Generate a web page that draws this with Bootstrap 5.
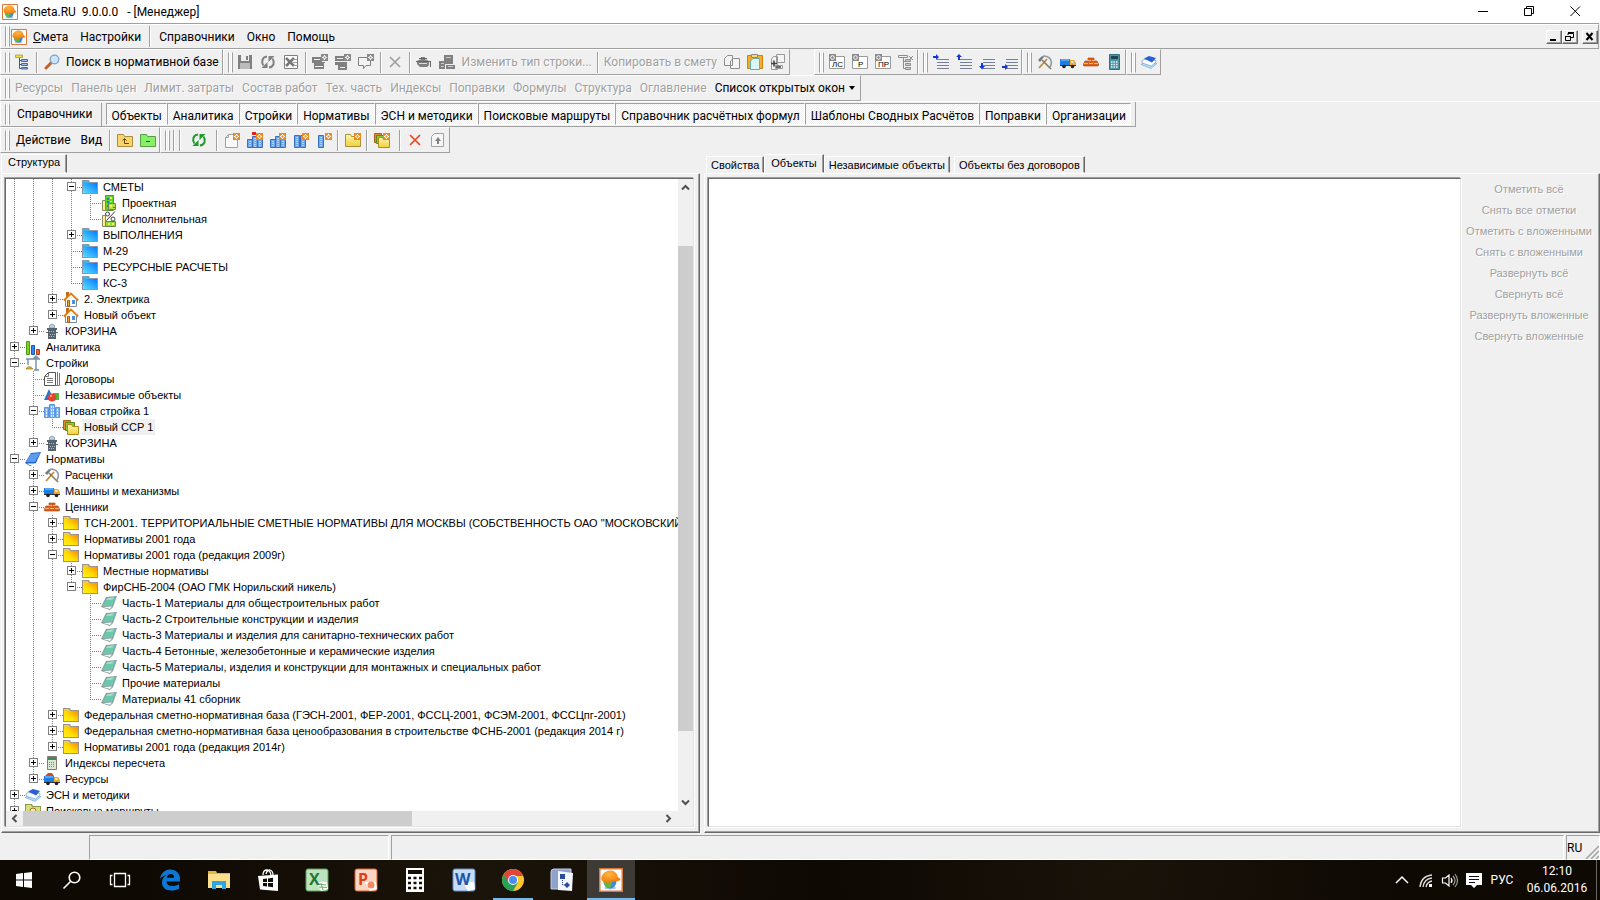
<!DOCTYPE html>
<html lang="ru">
<head>
<meta charset="utf-8">
<meta name="viewport" content="width=device-width, initial-scale=1">
<title>Smeta.RU 9.0.0.0 - [Менеджер]</title>
<link href="https://cdn.jsdelivr.net/npm/bootstrap@5.3.0/dist/css/bootstrap.min.css" rel="stylesheet">
<style>
:root{--face:#f0f0f0;--shade:#a0a0a0;--dark:#696969;--ui:Roboto,"Open Sans",sans-serif;--small:"Liberation Sans",Arial,sans-serif}
body{background:var(--face);color:#000;font:12px/16px var(--ui);height:100vh;overflow:hidden}
button{font:inherit;color:inherit;background:none;border:0;padding:0;white-space:nowrap}
svg{flex:none;display:block}
.ic{width:16px;height:16px}
/* title bar */
.titlebar{height:23px;background:#fff;padding:0 2px}
.titlebar h1{font:inherit;margin:0 0 0 5px;white-space:pre}
.win-btn{width:46px;height:23px;display:flex;align-items:center;justify-content:center}
.win-btn svg{width:11px;height:11px}
/* toolbars */
.band{height:26px}
.bar{height:26px;display:flex;align-items:center;border:1px solid;border-color:#fff var(--shade) var(--shade) #fff;padding-left:4px}
.menu-band{border-top:1px solid var(--shade);margin-right:1px}
.menu-band .bar{height:25px;flex:1}
.grip{width:5px;height:21px;margin-right:1px;border:1px solid;border-color:transparent var(--shade) transparent var(--shade);background:linear-gradient(90deg,#fff 1px,transparent 1px 2px,#fff 2px);flex:none}
.split{width:6px;height:21px;flex:none;background:linear-gradient(90deg,transparent 2px,var(--shade) 2px 3px,#fff 3px 4px,transparent 4px)}
.tb{width:23px;height:23px;display:flex;align-items:center;justify-content:center;flex:none}
.tx{padding:0 3px}
.panel-btn{padding:0 4px}
.act-btn{padding:0 5px}
.mn{padding:0 6px}
.off{color:var(--shade);text-shadow:1px 1px 0 #fff}
.gray{color:#808080}
.green{color:#1f9a2c}
.red{color:#ee4422}
.mdi{width:16px;height:14px;border:1px solid;border-color:#fff var(--dark) var(--dark) #fff;box-shadow:inset -1px -1px 0 var(--shade);display:flex;align-items:center;justify-content:center}
.mdi svg{width:10px;height:9px}
.section-first{height:23px;padding:0 8px 0 6px;border-right:1px solid var(--shade)}
.section-tab{height:22px;padding:3px 4px 0 5px;border:1px solid;border-color:var(--shade) #fff #fff var(--shade);background:repeating-conic-gradient(#fff 0 25%,#f0f0f0 0 50%) 0 0/2px 2px;line-height:16px}
/* panes */
.work{min-height:0}
.small-ui{font:11px/14px var(--small)}
.tabs{height:20px;align-items:flex-end}
.tabs button{height:17px;padding:0 4px;border:1px solid;border-color:#fff var(--dark) transparent #fff;box-shadow:inset -1px 0 0 var(--shade)}
.tabs button.on{height:19px;padding:0 6px 2px}
.page{border:1px solid;border-color:#fff var(--dark) var(--dark) #fff;box-shadow:inset -1px -1px 0 var(--shade);padding:4px 5px 5px 3px;min-height:0}
.sunk{border:1px solid;border-color:var(--dark) #e3e3e3 #e3e3e3 var(--dark);box-shadow:-1px -1px 0 var(--shade),1px 1px 0 #fff;background:#fff;min-width:0;min-height:0}
.left-pane{flex:699 1 0;min-width:0;margin-left:1px}
.right-pane{flex:896 1 0;min-width:0;margin-left:4px}
.right-pane .page{padding-right:2px}
.right-pane .tabs{padding-left:2px}
/* tree */
.tree,.tree ul{list-style:none;margin:0;padding:0}
.tree{padding-left:4px}
.tree ul{padding-left:19px}
.tree li{background:repeating-linear-gradient(#808080 0 1px,transparent 1px 2px) 4px 0/1px 100% no-repeat}
.tree li.end{background-size:1px 8px}
.node{height:16px;display:flex;align-items:center;white-space:nowrap;background:repeating-linear-gradient(90deg,#808080 0 1px,transparent 1px 2px) 4px 8px/11px 1px no-repeat}
.leaf{padding-left:15px}
.twist{width:9px;height:9px;border:1px solid #808080;margin-right:6px;flex:none;background:linear-gradient(#000,#000) 1px 3px/5px 1px no-repeat #fff}
.plus{background:linear-gradient(#000,#000) 1px 3px/5px 1px no-repeat,linear-gradient(#000,#000) 3px 1px/1px 5px no-repeat #fff}
.node span{margin-left:3px;padding:0 2px;line-height:16px}
.node .picked{background:var(--face)}
/* scroll bars */
.vscroll{width:15px;background:var(--face)}
.hscroll{height:15px;background:var(--face)}
.thumb{background:#cdcdcd}
.arr{width:17px;height:15px;display:flex;align-items:center;justify-content:center;flex:none}
.vscroll .arr{width:15px;height:17px}
.arr svg{width:9px;height:9px}
.marks{width:136px}
.marks button{height:21px;text-align:center}
/* status bar */
.status{height:27px;padding-top:2px;gap:2px}
.status div{border:1px solid;border-color:var(--shade) #fff #fff var(--shade)}
.st-a{width:87px}
.st-b{width:300px}
.st-lang{width:34px}
/* task bar */
.taskbar{height:40px;background:radial-gradient(circle at 30% 60%,#1b140a,transparent 30%),radial-gradient(circle at 70% 30%,#1a130a,transparent 25%),#0e0903;color:#fff}
.apps{gap:1px;padding-left:2px}
.task{width:48px;height:40px;display:flex;align-items:center;justify-content:center;flex:none}
.task svg{width:24px;height:24px}
.task.act{background:#3e3a36;border-bottom:2px solid #76b9ed;padding-top:2px}
.task.run{background:linear-gradient(#76b9ed,#76b9ed) 4px 38px/40px 2px no-repeat}
.tray{width:24px;height:40px;display:flex;align-items:center;justify-content:center}
.tray svg{width:18px;height:18px}
.lang{width:32px}
.clock{width:78px;text-align:center;line-height:17px}
.desk{width:4px;height:40px;border-left:1px solid #6a6763}
</style>
</head>
<body class="d-flex flex-column">

<svg width="0" height="0" class="position-absolute" aria-hidden="true">
<defs>
<linearGradient id="gBlue" x1="0" y1="1" x2="1" y2="0"><stop offset="0" stop-color="#5fe0ff"/><stop offset="1" stop-color="#0078ff"/></linearGradient>
<linearGradient id="gGold" x1="0" y1="1" x2="1" y2="0"><stop offset="0" stop-color="#fff21a"/><stop offset=".5" stop-color="#ffd800"/><stop offset="1" stop-color="#ff8a00"/></linearGradient>
<linearGradient id="gYel" x1="0" y1="0" x2="0" y2="1"><stop offset="0" stop-color="#fff6a8"/><stop offset="1" stop-color="#f0cf3a"/></linearGradient>
<radialGradient id="gHat" cx=".4" cy=".3" r=".7"><stop offset="0" stop-color="#ffb545"/><stop offset="1" stop-color="#f47a08"/></radialGradient>
</defs>
<symbol id="logo" viewBox="0 0 16 16"><path fill="#fff" stroke="#d9793c" d="M.5.5h15v15H.5z"/><ellipse cx="7.500" cy="13.300" rx="4" ry="1" fill="#a9bfe8"/><circle cx="7.300" cy="9.300" r="4.300" fill="#3e8ad8"/><path d="M3 8.500c.2 3.600 2.500 5 4 4.800 1-1 2-2.500 1.400-4.500z" fill="#5cbb3c"/><path d="M1.500 7.200C1.500 4 4.300 1.600 7.500 1.600c3 0 4.800 2 5 4.400l1.900 1.400c-.6 1.500-3 1.700-4.900 1.600C7 10.600 2 10 1.500 7.200z" fill="url(#gHat)"/></symbol>
<symbol id="f-blue" viewBox="0 0 16 16"><path fill="#8a9aa8" d="M0 1h7l1 2h8v12H0z"/><path fill="#39b5f5" d="M1 2h5l1 2H1z"/><path fill="url(#gBlue)" d="M1 4h14v10H1z"/></symbol>
<symbol id="f-gold" viewBox="0 0 16 16"><path fill="#9c9488" d="M0 1h7l1 2h8v12H0z"/><path fill="#f7c93c" d="M1 2h5l1 2H1z"/><path fill="url(#gGold)" d="M1 4h14v10H1z"/></symbol>
<symbol id="f-green" viewBox="0 0 16 16"><path fill="#8d9a4a" d="M0 1h7l1 2h8v12H0z"/><path fill="#d2e27c" d="M1 2h5l1 2h8v10H1z"/><circle cx="8" cy="8" r="3" fill="#f5ecc0" stroke="#b06a30"/></symbol>
<symbol id="est" viewBox="0 0 16 16"><path fill="#5fd62c" stroke="#6d8a4a" d="M4.500.5h8v15h-8z"/><path fill="#ffef8a" stroke="#8a8a60" d="M1.500 5.500h3v10h-3z"/><path fill="#b6e04a" stroke="#6d8a4a" d="M7.500 8.500h7v6h-7z"/><path fill="#2a70d8" d="M6 3h2v2H6zM6 6h2v2H6zM6 10h1v2H6zM12 12h2v1h-2z"/><path fill="#f6ff60" d="M9 2h2v2H9zM9 6h2v1H9zM9 10h2v2H9z"/></symbol>
<symbol id="est2" viewBox="0 0 16 16"><path fill="#ffef8a" stroke="#8a8a60" d="M1.500 4.500h3v11h-3z"/><path fill="#8fdc3c" stroke="#6d8a4a" d="M4.500 10.500h10v5h-10z"/><path fill="#f6ff60" d="M7 12h2v2H7zM11 12h2v2h-2z"/><path fill="none" stroke="#333" d="M14 .5 5.500 9.500"/><circle cx="6.500" cy="3" r="2" fill="#fff" stroke="#444"/><circle cx="12" cy="8" r="2" fill="#fff" stroke="#444"/></symbol>
<symbol id="house" viewBox="0 0 16 16"><path fill="#c26a1e" d="M3 1h3v5H3z"/><path fill="#fffef5" stroke="#7f8c9c" d="M2.500 8v7.500h11V8L8 3z"/><path fill="none" stroke="#e07c14" stroke-width="1.800" d="m.8 9.500 7.200-7 7.200 7"/><path fill="#f0a030" stroke="#a85f18" d="M4.500 9.500h2v6h-2z"/><path fill="#4a90e8" d="M9 9h3v4H9z"/></symbol>
<symbol id="bin" viewBox="0 0 16 16"><path fill="#bcd2e2" stroke="#8aa0b0" d="M5.500 5V2.500q2.500-3 5 0V5z"/><path fill="#56636f" d="M3 5h10v2H3zM4 7h8v9H4zM2 9h12v1H2z"/><path stroke="#aebbc6" stroke-dasharray="1 1" d="M5 8.500h6M6 11.500h6M5 13.500h6"/></symbol>
<symbol id="chart" viewBox="0 0 16 16"><path fill="#7ed321" stroke="#4a9a10" d="M1.500 2.500h3v13h-3z"/><path fill="#2f86f0" stroke="#1b5cb0" d="M6.500 6.500h3v9h-3z"/><path fill="#f2643c" stroke="#b83c1c" d="M11.500 10.500h3v5h-3z"/></symbol>
<symbol id="crane" viewBox="0 0 16 16"><path fill="none" stroke="#7390a8" stroke-width="1.400" d="M1 4h14M3 4v6M11 1v14M9 15h5M8 4l3-3 3 3"/><path fill="#e0b030" stroke="#8a6a18" stroke-width=".6" d="M1 14q3-5 7 0z"/></symbol>
<symbol id="docs" viewBox="0 0 16 16"><path fill="#fff" stroke="#555" d="M4.500 1.500h7v13H.5v-9z"/><path fill="none" stroke="#777" d="M13.500 1v13.500H11M15.500 2v12.500h-2M3 7.500h6M3 9.500h6M3 11.500h6M.5 5.500h4v-4"/></symbol>
<symbol id="shapes" viewBox="0 0 16 16"><path fill="#52b43c" d="M9 6h6v7H9z"/><path fill="#2c74cc" d="m5 2 5 11H0z"/><circle cx="8" cy="10.500" r="4" fill="#e8402a"/><circle cx="7" cy="9" r="1.200" fill="#ff9c8a"/></symbol>
<symbol id="build" viewBox="0 0 16 16"><path fill="#7db2f2" stroke="#5a94e0" d="M.5 4.500h4v10h-4zM5.500 1.500h5v13h-5zM11.500 4.500h4v10h-4z"/><path fill="none" stroke="#e4f0ff" stroke-dasharray="2 1" d="M2.500 6v8M7.500 3v11M9.500 3v11M13.500 6v8"/></symbol>
<symbol id="ssr" viewBox="0 0 16 16"><path fill="#e48a2a" stroke="#a85f18" d="M.5 1.500h7v9h-7z"/><path fill="#8cc63f" stroke="#5a8a1c" d="M2.500 3.500h9v8h-9z"/><path fill="url(#gYel)" stroke="#b08c20" d="M4.500 5.500h4l1 2h6v8h-11z"/></symbol>
<symbol id="book" viewBox="0 0 16 16"><path fill="#2462c8" d="M0 12 6 2l10-1-5 11-6 3z"/><path fill="#5a9cf2" d="M1 11 6 3l9-1-5 9z"/><path fill="#fff" d="M2 12.500h8l-.5 1.200-5 .3z"/></symbol>
<symbol id="teal" viewBox="0 0 16 16"><path fill="#8a9c98" d="M0 12 5 2l11-1-4 11-3 3z"/><path fill="#6cc7b0" d="M1 11 6 3l9-1-4 9z"/><path fill="#a4e4d2" d="m5 5 2-2 6-.5-2 2z"/><path fill="#eef6f4" d="m2 12 9-.5-2 2.500z"/></symbol>
<symbol id="tools" viewBox="0 0 16 16"><path fill="none" stroke="#8d99a0" stroke-width="1.600" d="M6 2c8 0 10 6 7 11"/><path stroke="#c08a3c" stroke-width="1.800" d="m2 14 8-9"/><path stroke="#8a7a5c" stroke-width="1.600" d="m5 6 9 9"/><path fill="#707c84" d="M1 6 5 2l2 1-4 5z"/></symbol>
<symbol id="truck" viewBox="0 0 16 16"><path fill="#1f7ce0" d="M0 5h10v6H0z"/><path fill="#55a8f8" d="M1 5h8v2H1z"/><path fill="#f2a82c" d="M10 6h4l2 3v3h-6z"/><path fill="#cfe8ff" d="M11 7h2l1 2h-3z"/><path fill="#333" d="M0 11h16v1H0z"/><circle cx="4" cy="12.500" r="1.800" fill="#222"/><circle cx="12.500" cy="12.500" r="1.800" fill="#222"/></symbol>
<symbol id="load" viewBox="0 0 16 16"><use href="#truck"/><path fill="#c8501c" d="m1 5 3-3h4l2 3z"/></symbol>
<symbol id="bricks" viewBox="0 0 16 16"><path fill="#d9601a" stroke="#a8400c" stroke-width=".6" d="M5 4h6v3h3l2 4-1 1H1l-1-1 2-4h3z"/><path stroke="#ffb07a" d="M1 9.500h4M6 9.500h4M11 9.500h4M4 6.500h4M9 6.500h4"/></symbol>
<symbol id="calc" viewBox="0 0 16 16"><path fill="#4f93a2" stroke="#35707e" d="M3.500.5h10v15h-10z"/><path fill="#1d4450" d="M5 2h7v3H5z"/><path fill="none" stroke="#e8f6fa" stroke-width="1.600" stroke-dasharray="1.500 1" d="M5 8h7M5 10.500h7M5 13h7"/></symbol>
<symbol id="calc2" viewBox="0 0 16 16"><path fill="#dce8d8" stroke="#8a7a68" d="M3.500 1.500h9v13h-9z"/><path fill="#3d8a68" d="M4 2h8v3H4z"/><path fill="none" stroke="#8a7a68" stroke-dasharray="1 1" d="M5 7.500h6M5 9.500h6M5 11.500h6"/></symbol>
<symbol id="stack" viewBox="0 0 16 16"><path fill="#b8dcf4" stroke="#6aa4d4" stroke-width=".6" d="M0 10.500 5 8l11 1.500-6 5z"/><path fill="#fff" stroke="#5a90c4" stroke-width=".6" d="m1 6.500 2-1 12 1v1.500l-4.500 4L1 9z"/><path fill="#2b60d4" d="m3 4.500 5-2.500 7 2-4 4.500z"/></symbol>
<symbol id="star" viewBox="0 0 16 16"><path fill="#ee8a1c" d="M9 1h7v7H9z"/><path stroke="#fff" d="M12.500 2v5M10 4.500h5"/><circle cx="12.500" cy="4.500" r="1.500" fill="#ee8a1c" stroke="#fff"/></symbol>
<symbol id="gstar" viewBox="0 0 16 16"><path fill="#8a8a8a" d="M9 0h7v7H9z"/><path stroke="#fff" d="M12.500 1v5M10 3.500h5"/><circle cx="12.500" cy="3.500" r="1.300" fill="#8a8a8a" stroke="#fff"/></symbol>
<symbol id="hier" viewBox="0 0 16 16"><path fill="#f2e03a" stroke="#8c8420" stroke-width=".6" d="M.5 1h7v2.500h-7z"/><path fill="none" stroke="#456" d="M4.500 4v10.500H6M4.500 6.500H6M4.500 10.500H6"/><path fill="#9fc0e8" stroke="#456a98" d="M6.500 5.500h6v2h-6zM6.500 9.500h6v2h-6zM6.500 13.500h6v1.500h-6z"/></symbol>
<symbol id="mag" viewBox="0 0 16 16"><path stroke="#c4622c" stroke-width="3" stroke-linecap="round" d="m2 14 5-5"/><circle cx="10.500" cy="5.500" r="4.300" fill="#c8e4fa" stroke="#88a0c0" stroke-width="1.300"/><path fill="#fff" d="M8 5q1-3 4-2.500Q9 3 8 5z"/></symbol>
<symbol id="save" viewBox="0 0 16 16"><path fill="#808080" d="M1 1h14v14H1z"/><path fill="#f0f0f0" d="M4 1h8v6H4z"/><path fill="#808080" d="M9 2h2v4H9z"/><path fill="#bbb" d="M3 9h10v6H3z"/></symbol>
<symbol id="cyc" viewBox="0 0 16 16"><path fill="none" stroke="currentColor" stroke-width="2" d="M7 2.500C2 3 1 8 3.500 11.500M9 13.500c5-.5 6-5.500 3.500-9"/><path fill="currentColor" d="M1.500 14h6V8zM14.500 2h-6v6z"/></symbol>
<symbol id="xls" viewBox="0 0 16 16"><path fill="#fff" stroke="#808080" d="M1.500 1.500h13v13h-13z"/><path stroke="#777" stroke-width="2.500" d="m3 4 8 8M11 4l-8 8"/><path stroke="#999" d="M10 5.500h4M10 8.500h4M10 11.500h4"/></symbol>
<symbol id="row1" viewBox="0 0 16 16"><path fill="#808080" d="M0 3h10v5h3v1H0zM2 9h10v6H2z"/><path stroke="#f0f0f0" d="M2 5.500h6M3 12.500h8"/><use href="#gstar"/></symbol>
<symbol id="row2" viewBox="0 0 16 16"><path fill="#808080" d="M0 2h9v5H0zM0 8h12v3H0zM3 11h9v5H3z"/><path stroke="#f0f0f0" d="M2 4.500h6M5 13.500h5"/><use href="#gstar"/></symbol>
<symbol id="talk" viewBox="0 0 16 16"><path fill="#f4f4f4" stroke="#808080" d="M.5 3.500h12v8H8L5.500 14.500v-3h-5z"/><use href="#gstar"/></symbol>
<symbol id="cross" viewBox="0 0 16 16"><path fill="none" stroke="currentColor" stroke-width="1.700" d="m3 3 10 10M13 3 3 13"/></symbol>
<symbol id="pot" viewBox="0 0 16 16"><path fill="#808080" d="M1 7q6-4 12 0v4l-2 2H4l-3-3zM5 3h4v3H5z"/><path fill="none" stroke="#666" d="M0 7.500h14M3 4.500h8M14.500 7v6"/><path stroke="#ddd" d="M3 9.500h8"/></symbol>
<symbol id="blk" viewBox="0 0 16 16"><path fill="#808080" d="M5 1h9v9H5zM0 7h6v8H0zM7 11h9v4H7z"/><path stroke="#ccc" d="M7 3.500h5M2 9.500h3M2 12.500h3M9 12.500h5"/></symbol>
<symbol id="copy" viewBox="0 0 16 16"><path fill="#f4f4f4" stroke="#8c8c8c" d="M.5 4.500 3.500 1.500h5v10h-8zM6.500 7l3-2.500h6v10h-9z"/></symbol>
<symbol id="paste" viewBox="0 0 16 16"><path fill="#f5ae28" stroke="#c98410" d="M.5 1.500h15v13H.5z"/><path fill="#f8d878" stroke="#8a8a8a" d="M4.500.5h6v3h-6z"/><path fill="#d8f8fa" stroke="#6aa" d="m3.500 7 2.500-2.500h6.500v11h-9z"/></symbol>
<symbol id="addrow" viewBox="0 0 16 16"><path fill="#f4f4f4" stroke="#999" d="M1.500 5l2-2.500h4v13h-6zM6.500.5h8v8h-8zM5.500 11.500h7v3h-7z"/><path stroke="#444" stroke-width="1.600" d="M1 9.500h6M4 6.500v6M6 13h5"/></symbol>
<symbol id="frame" viewBox="0 0 16 16"><path fill="#fff" stroke="#9a9a9a" d="M.5 2.500h15v12H.5z"/><path fill="#8a8a8a" d="M0 0h7v7H0z"/><circle cx="3.500" cy="3.500" r="1.800" fill="#8a8a8a" stroke="#fff"/></symbol>
<symbol id="hx" viewBox="0 0 16 16"><path fill="none" stroke="#8c8c8c" d="M.5 1.500h9v2h-9zM5.500 3v11.500H8M5.500 7.500H8M11 2l4 4M15 2l-4 4"/><path fill="#ccc" stroke="#8c8c8c" d="M7.500 5.500h5v2h-5zM7.500 9.500h5v2h-5zM7.500 13.500h5v2h-5z"/></symbol>
<symbol id="lines" viewBox="0 0 16 16"><path stroke="#77829a" d="M4 5.500h12M4 8.500h12M4 11.500h12M4 14.500h12"/></symbol>
<symbol id="arR" viewBox="0 0 16 16"><path fill="#1238d8" d="M0 2h3V0l3 3-3 3V4H0z"/></symbol>
<symbol id="arU" viewBox="0 0 16 16"><path fill="#1238d8" d="M2 6V3H0l3-3 3 3H4v3z"/></symbol>
<symbol id="arD" viewBox="0 0 16 16"><path fill="#1238d8" d="M2 9v3H0l3 3.500L6 12H4V9z"/></symbol>
<symbol id="arB" viewBox="0 0 16 16"><path fill="#1238d8" d="M0 12h3v-2l3 3-3 3v-2H0z"/></symbol>
<symbol id="fup" viewBox="0 0 16 16"><path fill="#fcd467" stroke="#a88c40" d="M.5 2.500h6l1 2h8v10H.5z"/><path fill="none" stroke="#5a4a10" d="M7.500 7v4.500H12M5.500 8.500l2-2 2 2"/></symbol>
<symbol id="fmin" viewBox="0 0 16 16"><path fill="#86f068" stroke="#5a9c48" d="M.5 2.500h6l1 2h8v10H.5z"/><path stroke="#1c5c10" d="M6 9.500h4"/></symbol>
<symbol id="page" viewBox="0 0 16 16"><path fill="#fafafa" stroke="#a0a0a0" d="M4.500 2.500h9v13h-12v-10z"/><path fill="none" stroke="#a0a0a0" d="M4.500 2.500v3h-3"/></symbol>
<symbol id="city" viewBox="0 0 16 16"><path fill="#6ea6ee" stroke="#3a70c0" d="M.5 7.500h5v8h-5zM5.500 4.500h5v11h-5zM10.500 7.500h5v8h-5z"/><path stroke="#fff" stroke-dasharray="1 1" d="M3 9v6M8 6v9M13 9v6"/></symbol>
<symbol id="towers" viewBox="0 0 16 16"><path fill="#6ea6ee" stroke="#3a70c0" d="M1.500 3.500h5v12h-5z"/><path stroke="#fff" stroke-dasharray="1 1" d="M4 5v10"/></symbol>
<symbol id="fnew" viewBox="0 0 16 16"><path fill="url(#gYel)" stroke="#a89038" d="M.5 2.500h5l1 2h9v10H.5z"/></symbol>
<symbol id="up" viewBox="0 0 16 16"><path fill="#f6f6f6" stroke="#a0a0a0" d="M4.500 1.500h9v13h-12v-10z"/><path fill="#808080" d="M7 12V9H5l3-4 3 4H9v3z"/></symbol>
<symbol id="ch-u" viewBox="0 0 9 9"><path fill="none" stroke="#505050" stroke-width="2" d="M1 6.500 4.500 3 8 6.500"/></symbol>
</svg>

<header class="titlebar d-flex align-items-center flex-shrink-0">
  <svg class="ic"><use href="#logo"/></svg>
  <h1>Smeta.RU  9.0.0.0   - [Менеджер]</h1>
  <button class="win-btn ms-auto" aria-label="Свернуть"><svg viewBox="0 0 11 11"><path stroke="#000" d="M0 5.500h10"/></svg></button>
  <button class="win-btn" aria-label="Восстановить"><svg viewBox="0 0 11 11"><path fill="none" stroke="#000" d="M.5 2.500h7v7h-7zM2.500 2V.5h7v7H8"/></svg></button>
  <button class="win-btn" aria-label="Закрыть"><svg viewBox="0 0 11 11"><path stroke="#000" d="m.5.5 9.500 9.500M10 .5.5 10"/></svg></button>
</header>

<nav class="menu-band d-flex flex-shrink-0" aria-label="Меню">
  <div class="bar"><i class="grip"></i><svg class="ic"><use href="#logo"/></svg>
    <button class="mn"><u>С</u>мета</button><button class="mn">Настройки</button><i class="split"></i>
    <button class="mn">Справочники</button><button class="mn">Окно</button><button class="mn">Помощь</button>
    <button class="mdi ms-auto" aria-label="Свернуть окно"><svg viewBox="0 0 10 9"><path d="M1 7h6v2H1z"/></svg></button>
    <button class="mdi" aria-label="Восстановить окно"><svg viewBox="0 0 10 9"><path fill="none" stroke="#000" d="M.5 4.500h5v4h-5zM3 3V1.500h5.500v4H6M0 4.500h6M3 .5h6"/></svg></button>
    <button class="mdi mx-1 me-0" aria-label="Закрыть окно"><svg viewBox="0 0 10 9"><path stroke="#000" stroke-width="2" d="m1.500 1 6 7M7.500 1l-6 7"/></svg></button>
  </div>
</nav>

<div class="band d-flex flex-shrink-0">
  <div class="bar"><i class="grip"></i>
    <button class="tb" aria-label="Структура"><svg class="ic"><use href="#hier"/></svg></button><i class="split"></i>
    <button class="tb" aria-label="Найти"><svg class="ic"><use href="#mag"/></svg></button><button class="tx">Поиск в нормативной базе</button></div>
  <div class="bar"><i class="grip"></i>
    <button class="tb" aria-label="Сохранить"><svg class="ic"><use href="#save"/></svg></button>
    <button class="tb gray" aria-label="Обновить"><svg class="ic"><use href="#cyc"/></svg></button>
    <button class="tb" aria-label="Excel"><svg class="ic"><use href="#xls"/></svg></button><i class="split"></i>
    <button class="tb" aria-label="Раздел"><svg class="ic"><use href="#row1"/></svg></button>
    <button class="tb" aria-label="Строка"><svg class="ic"><use href="#row2"/></svg></button>
    <button class="tb" aria-label="Комментарий"><svg class="ic"><use href="#talk"/></svg></button><i class="split"></i>
    <button class="tb off" aria-label="Удалить"><svg class="ic"><use href="#cross"/></svg></button><i class="split"></i>
    <button class="tb" aria-label="Ресурс"><svg class="ic"><use href="#pot"/></svg></button>
    <button class="tb" aria-label="Блок"><svg class="ic"><use href="#blk"/></svg></button>
    <button class="tx off">Изменить тип строки...</button><i class="split"></i>
    <button class="tx off">Копировать в смету</button>
    <button class="tb" aria-label="Копировать"><svg class="ic"><use href="#copy"/></svg></button>
    <button class="tb" aria-label="Вставить"><svg class="ic"><use href="#paste"/></svg></button>
    <button class="tb" aria-label="Добавить"><svg class="ic"><use href="#addrow"/></svg></button></div>
  <div class="bar ms-4"><i class="grip"></i>
    <button class="tb" aria-label="Локальная смета"><svg class="ic" font-family="Liberation Sans" font-size="8"><use href="#frame"/><text x="3" y="13">ЛС</text></svg></button>
    <button class="tb" aria-label="Раздел"><svg class="ic" font-family="Liberation Sans" font-size="8"><use href="#frame"/><text x="6" y="13">Р</text></svg></button>
    <button class="tb" aria-label="Подраздел"><svg class="ic" font-family="Liberation Sans" font-size="8"><use href="#frame"/><text x="3" y="13">ПР</text></svg></button>
    <button class="tb" aria-label="Убрать уровень"><svg class="ic"><use href="#hx"/></svg></button></div>
  <div class="bar"><i class="grip"></i>
    <button class="tb" aria-label="Вправо"><svg class="ic"><use href="#lines"/><use href="#arR"/></svg></button>
    <button class="tb" aria-label="Вверх"><svg class="ic"><use href="#lines"/><use href="#arU"/></svg></button>
    <button class="tb" aria-label="Вниз"><svg class="ic"><use href="#lines"/><use href="#arD"/></svg></button>
    <button class="tb" aria-label="В конец"><svg class="ic"><use href="#lines"/><use href="#arB"/></svg></button></div>
  <div class="bar"><i class="grip"></i>
    <button class="tb" aria-label="Расценки"><svg class="ic"><use href="#tools"/></svg></button>
    <button class="tb" aria-label="Машины"><svg class="ic"><use href="#truck"/></svg></button>
    <button class="tb" aria-label="Материалы"><svg class="ic"><use href="#bricks"/></svg></button>
    <button class="tb" aria-label="Калькулятор"><svg class="ic"><use href="#calc"/></svg></button></div>
  <div class="bar"><i class="grip"></i>
    <button class="tb" aria-label="Методики"><svg class="ic"><use href="#stack"/></svg></button></div>
</div>

<div class="band d-flex flex-shrink-0">
  <div class="bar"><i class="grip"></i>
    <button class="panel-btn off">Ресурсы</button><button class="panel-btn off">Панель цен</button><button class="panel-btn off">Лимит. затраты</button><button class="panel-btn off">Состав работ</button><button class="panel-btn off">Тех. часть</button><button class="panel-btn off">Индексы</button><button class="panel-btn off">Поправки</button><button class="panel-btn off">Формулы</button><button class="panel-btn off">Структура</button><button class="panel-btn off">Оглавление</button>
    <button class="panel-btn d-flex align-items-center gap-1">Список открытых окон <svg width="7" height="4" viewBox="0 0 7 4"><path d="M0 0h6L3 4z"/></svg></button></div>
</div>

<nav class="band d-flex flex-shrink-0 border-top border-white" aria-label="Разделы">
  <div class="bar pe-1 border-top-0 h-100"><i class="grip"></i>
    <button class="section-first me-1">Справочники</button>
    <button class="section-tab">Объекты</button><button class="section-tab">Аналитика</button><button class="section-tab">Стройки</button><button class="section-tab">Нормативы</button><button class="section-tab">ЭСН и методики</button><button class="section-tab">Поисковые маршруты</button><button class="section-tab">Справочник расчётных формул</button><button class="section-tab">Шаблоны Сводных Расчётов</button><button class="section-tab">Поправки</button><button class="section-tab">Организации</button></div>
</nav>

<div class="band d-flex flex-shrink-0">
  <div class="bar"><i class="grip"></i>
    <button class="act-btn">Действие</button><button class="act-btn">Вид</button><i class="split"></i>
    <button class="tb" aria-label="На уровень выше"><svg class="ic"><use href="#fup"/></svg></button>
    <button class="tb" aria-label="Свернуть"><svg class="ic"><use href="#fmin"/></svg></button></div>
  <div class="bar"><i class="grip"></i><i class="split"></i><i class="split"></i>
    <button class="tb green ms-1" aria-label="Обновить"><svg class="ic"><use href="#cyc"/></svg></button><i class="split ms-1"></i>
    <button class="tb" aria-label="Новый документ"><svg class="ic"><use href="#page"/><use href="#star"/></svg></button>
    <button class="tb" aria-label="Новая стройка"><svg class="ic"><use href="#city"/><path fill="#e02020" d="M5 0h4v3H5z"/><use href="#star"/></svg></button>
    <button class="tb" aria-label="Новая очередь"><svg class="ic"><use href="#city"/><use href="#star"/></svg></button>
    <button class="tb" aria-label="Новый комплекс"><svg class="ic"><use href="#towers"/><use href="#towers" x="6"/><use href="#star"/></svg></button>
    <button class="tb" aria-label="Новый объект"><svg class="ic"><use href="#towers" x="1"/><use href="#star"/></svg></button><i class="split"></i>
    <button class="tb" aria-label="Новая папка"><svg class="ic"><use href="#fnew"/><use href="#star"/></svg></button><i class="split"></i>
    <button class="tb" aria-label="Новый ССР"><svg class="ic"><use href="#ssr"/><use href="#star"/></svg></button><i class="split ms-1"></i>
    <button class="tb red" aria-label="Удалить"><svg class="ic"><use href="#cross"/></svg></button>
    <button class="tb" aria-label="Выгрузить"><svg class="ic"><use href="#up"/></svg></button></div>
</div>

<main class="work d-flex flex-grow-1 small-ui">
  <section class="left-pane d-flex flex-column">
    <div class="tabs d-flex"><button class="on">Структура</button></div>
    <div class="page flex-grow-1 d-flex">
      <div class="sunk flex-grow-1 d-flex flex-column">
        <div class="work d-flex flex-grow-1">
          <div class="flex-grow-1 overflow-hidden">
            <ul class="tree">
              <li><ul>
                <li><ul>
                  <li><ul>
                    <li><div class="node"><button class="twist" aria-label="Свернуть"></button><svg class="ic"><use href="#f-blue"/></svg><span>СМЕТЫ</span></div>
                      <ul>
                        <li><div class="node leaf"><svg class="ic"><use href="#est"/></svg><span>Проектная</span></div></li>
                        <li class="end"><div class="node leaf"><svg class="ic"><use href="#est2"/></svg><span>Исполнительная</span></div></li>
                      </ul></li>
                    <li><div class="node"><button class="twist plus" aria-label="Развернуть"></button><svg class="ic"><use href="#f-blue"/></svg><span>ВЫПОЛНЕНИЯ</span></div></li>
                    <li><div class="node leaf"><svg class="ic"><use href="#f-blue"/></svg><span>М-29</span></div></li>
                    <li><div class="node leaf"><svg class="ic"><use href="#f-blue"/></svg><span>РЕСУРСНЫЕ РАСЧЕТЫ</span></div></li>
                    <li class="end"><div class="node leaf"><svg class="ic"><use href="#f-blue"/></svg><span>КС-3</span></div></li>
                  </ul></li>
                  <li><div class="node"><button class="twist plus" aria-label="Развернуть"></button><svg class="ic"><use href="#house"/></svg><span>2. Электрика</span></div></li>
                  <li class="end"><div class="node"><button class="twist plus" aria-label="Развернуть"></button><svg class="ic"><use href="#house"/></svg><span>Новый объект</span></div></li>
                </ul></li>
                <li class="end"><div class="node"><button class="twist plus" aria-label="Развернуть"></button><svg class="ic"><use href="#bin"/></svg><span>КОРЗИНА</span></div></li>
              </ul></li>
              <li><div class="node"><button class="twist plus" aria-label="Развернуть"></button><svg class="ic"><use href="#chart"/></svg><span>Аналитика</span></div></li>
              <li><div class="node"><button class="twist" aria-label="Свернуть"></button><svg class="ic"><use href="#crane"/></svg><span>Стройки</span></div>
                <ul>
                  <li><div class="node leaf"><svg class="ic"><use href="#docs"/></svg><span>Договоры</span></div></li>
                  <li><div class="node leaf"><svg class="ic"><use href="#shapes"/></svg><span>Независимые объекты</span></div></li>
                  <li><div class="node"><button class="twist" aria-label="Свернуть"></button><svg class="ic"><use href="#build"/></svg><span>Новая стройка 1</span></div>
                    <ul><li class="end"><div class="node leaf"><svg class="ic"><use href="#ssr"/></svg><span class="picked">Новый ССР 1</span></div></li></ul></li>
                  <li class="end"><div class="node"><button class="twist plus" aria-label="Развернуть"></button><svg class="ic"><use href="#bin"/></svg><span>КОРЗИНА</span></div></li>
                </ul></li>
              <li><div class="node"><button class="twist" aria-label="Свернуть"></button><svg class="ic"><use href="#book"/></svg><span>Нормативы</span></div>
                <ul>
                  <li><div class="node"><button class="twist plus" aria-label="Развернуть"></button><svg class="ic"><use href="#tools"/></svg><span>Расценки</span></div></li>
                  <li><div class="node"><button class="twist plus" aria-label="Развернуть"></button><svg class="ic"><use href="#truck"/></svg><span>Машины и механизмы</span></div></li>
                  <li><div class="node"><button class="twist" aria-label="Свернуть"></button><svg class="ic"><use href="#bricks"/></svg><span>Ценники</span></div>
                    <ul>
                      <li><div class="node"><button class="twist plus" aria-label="Развернуть"></button><svg class="ic"><use href="#f-gold"/></svg><span>ТСН-2001. ТЕРРИТОРИАЛЬНЫЕ СМЕТНЫЕ НОРМАТИВЫ ДЛЯ МОСКВЫ (СОБСТВЕННОСТЬ ОАО "МОСКОВСКИЙ</span></div></li>
                      <li><div class="node"><button class="twist plus" aria-label="Развернуть"></button><svg class="ic"><use href="#f-gold"/></svg><span>Нормативы 2001 года</span></div></li>
                      <li><div class="node"><button class="twist" aria-label="Свернуть"></button><svg class="ic"><use href="#f-gold"/></svg><span>Нормативы 2001 года (редакция 2009г)</span></div>
                        <ul>
                          <li><div class="node"><button class="twist plus" aria-label="Развернуть"></button><svg class="ic"><use href="#f-gold"/></svg><span>Местные нормативы</span></div></li>
                          <li class="end"><div class="node"><button class="twist" aria-label="Свернуть"></button><svg class="ic"><use href="#f-gold"/></svg><span>ФирСНБ-2004 (ОАО ГМК Норильский никель)</span></div>
                            <ul>
                              <li><div class="node leaf"><svg class="ic"><use href="#teal"/></svg><span>Часть-1 Материалы для общестроительных работ</span></div></li>
                              <li><div class="node leaf"><svg class="ic"><use href="#teal"/></svg><span>Часть-2 Строительные конструкции и изделия</span></div></li>
                              <li><div class="node leaf"><svg class="ic"><use href="#teal"/></svg><span>Часть-3 Материалы и изделия для санитарно-технических работ</span></div></li>
                              <li><div class="node leaf"><svg class="ic"><use href="#teal"/></svg><span>Часть-4 Бетонные, железобетонные и керамические изделия</span></div></li>
                              <li><div class="node leaf"><svg class="ic"><use href="#teal"/></svg><span>Часть-5 Материалы, изделия и конструкции для монтажных и специальных работ</span></div></li>
                              <li><div class="node leaf"><svg class="ic"><use href="#teal"/></svg><span>Прочие материалы</span></div></li>
                              <li class="end"><div class="node leaf"><svg class="ic"><use href="#teal"/></svg><span>Материалы 41 сборник</span></div></li>
                            </ul></li>
                        </ul></li>
                      <li><div class="node"><button class="twist plus" aria-label="Развернуть"></button><svg class="ic"><use href="#f-gold"/></svg><span>Федеральная сметно-нормативная база (ГЭСН-2001, ФЕР-2001, ФССЦ-2001, ФСЭМ-2001, ФССЦпг-2001)</span></div></li>
                      <li><div class="node"><button class="twist plus" aria-label="Развернуть"></button><svg class="ic"><use href="#f-gold"/></svg><span>Федеральная сметно-нормативная база ценообразования в строительстве ФСНБ-2001 (редакция 2014 г)</span></div></li>
                      <li class="end"><div class="node"><button class="twist plus" aria-label="Развернуть"></button><svg class="ic"><use href="#f-gold"/></svg><span>Нормативы 2001 года (редакция 2014г)</span></div></li>
                    </ul></li>
                  <li><div class="node"><button class="twist plus" aria-label="Развернуть"></button><svg class="ic"><use href="#calc2"/></svg><span>Индексы пересчета</span></div></li>
                  <li class="end"><div class="node"><button class="twist plus" aria-label="Развернуть"></button><svg class="ic"><use href="#load"/></svg><span>Ресурсы</span></div></li>
                </ul></li>
              <li><div class="node"><button class="twist plus" aria-label="Развернуть"></button><svg class="ic"><use href="#stack"/></svg><span>ЭСН и методики</span></div></li>
              <li><div class="node"><button class="twist plus" aria-label="Развернуть"></button><svg class="ic"><use href="#f-green"/></svg><span>Поисковые маршруты</span></div></li>
            </ul>
          </div>
          <div class="vscroll d-flex flex-column flex-shrink-0">
            <button class="arr" aria-label="Вверх"><svg><use href="#ch-u"/></svg></button>
            <div style="flex:50"></div><div class="thumb" style="flex:485"></div><div style="flex:63"></div>
            <button class="arr" aria-label="Вниз"><svg viewBox="0 0 9 9"><path fill="none" stroke="#505050" stroke-width="2" d="M1 2.500 4.500 6 8 2.500"/></svg></button>
          </div>
        </div>
        <div class="hscroll d-flex pe-3 flex-shrink-0">
          <button class="arr" aria-label="Влево"><svg viewBox="0 0 9 9"><path fill="none" stroke="#505050" stroke-width="2" d="M6.500 1 3 4.500 6.500 8"/></svg></button>
          <div class="thumb" style="flex:390"></div><div style="flex:248"></div>
          <button class="arr" aria-label="Вправо"><svg viewBox="0 0 9 9"><path fill="none" stroke="#505050" stroke-width="2" d="M2.500 1 6 4.500 2.500 8"/></svg></button>
        </div>
      </div>
    </div>
  </section>

  <section class="right-pane d-flex flex-column">
    <div class="tabs d-flex"><button>Свойства</button><button class="on">Объекты</button><button>Независимые объекты</button><button class="ms-1">Объекты без договоров</button></div>
    <div class="page flex-grow-1 d-flex">
      <div class="sunk flex-grow-1"></div>
      <div class="marks d-flex flex-column flex-shrink-0">
        <button class="off">Отметить всё</button><button class="off">Снять все отметки</button><button class="off">Отметить с вложенными</button><button class="off">Снять с вложенными</button><button class="off">Развернуть всё</button><button class="off">Свернуть всё</button><button class="off">Развернуть вложенные</button><button class="off">Свернуть вложенные</button>
      </div>
    </div>
  </section>
</main>

<footer class="status d-flex flex-shrink-0">
  <div class="st-a border-0"></div><div class="st-b"></div><div class="flex-grow-1"></div>
  <div class="st-lang d-flex align-items-center justify-content-between"><span>RU</span><svg class="align-self-end" width="14" height="14"><path stroke="#a0a0a0" stroke-width="1.500" d="M1 14 14 1M6 14l8-8M11 14l3-3"/></svg></div>
</footer>

<div class="taskbar d-flex flex-shrink-0 align-items-center">
  <div class="d-flex">
    <button class="task" aria-label="Пуск"><svg viewBox="0 0 24 24"><path fill="#fff" d="m4 6 7-1v6.500H4zM12 4.900 20 4v7.500h-8zM4 12.500h7V19l-7-1zM12 12.500h8V20l-8-1z"/></svg></button>
    <button class="task" aria-label="Поиск"><svg viewBox="0 0 24 24"><g fill="none" stroke="#fff" stroke-width="1.600"><circle cx="14.500" cy="9.500" r="5.300"/><path d="m10.500 13.500-7 7"/></g></svg></button>
    <button class="task" aria-label="Представление задач"><svg viewBox="0 0 24 24"><path fill="none" stroke="#fff" stroke-width="1.300" d="M6.500 5.500h11v13h-11zM4.500 7.500h-2v9h2M19.500 7.500h2v9h-2"/></svg></button>
  </div>
  <div class="apps d-flex">
    <button class="task" aria-label="Edge"><svg viewBox="0 0 24 24"><path fill="#0b78d7" d="M2 11C3 4 8 1.500 12 1.500c6 0 10 4 10 9v3H8.500c.2 3 2.500 4.500 6 4.500 2.500 0 4.500-.6 6.500-1.800v4.500c-2 1.200-4.500 1.800-7.500 1.800C7 22.500 4 19 4 14.500c0-3.500 2-6 4.500-7.500C5.500 7.500 3.500 9 2 11zm6.700-1.200h7.500C16 7.500 15 6 12.700 6 10.500 6 9.100 7.500 8.700 9.800z"/></svg></button>
    <button class="task" aria-label="Проводник"><svg viewBox="0 0 24 24"><path fill="#e8b63c" d="M1 3h8l1 2h13v15H1z"/><path fill="#fbdf8c" d="M1 6h22v14H1z"/><path fill="#2ea7e0" d="M5 13h14v8h-4v-4H9v4H5z"/></svg></button>
    <button class="task" aria-label="Магазин"><svg viewBox="0 0 24 24"><path fill="none" stroke="#fff" stroke-width="1.300" d="M7 7q0-5 4-5 3 0 4 5M10 6q1-4 4-4 3 1 3 5"/><path fill="#fff" d="M2 8 22 6.500V23L4 21.500z"/><path fill="#120d06" d="m7 11 4-.5v3.500H7zM12 10.400l5-.6V14h-5zM7 15h4v3.500L7 18zM12 15h5v4.200l-5-.6z"/></svg></button>
    <button class="task" aria-label="Excel"><svg viewBox="0 0 24 24" font-family="Open Sans" font-weight="700" font-size="16"><rect x="1" y="1" width="22" height="22" rx="2" fill="#bfe3bf" stroke="#5aa05a"/><path fill="#fff" d="M11 14h11l1 7-7 2z"/><path stroke="#6bb06b" d="m13 16 8 1M14 19l8 .5M16 15l2 7"/><text x="4" y="17" fill="#1d7a34">X</text></svg></button>
    <button class="task" aria-label="PowerPoint"><svg viewBox="0 0 24 24" font-family="Open Sans" font-weight="700" font-size="16"><rect x="1" y="1" width="22" height="22" rx="2" fill="#fbd5c4" stroke="#e0622c"/><path fill="#fff" d="M11 14h11l1 7-7 2z"/><circle cx="17" cy="17" r="3.500" fill="#f08a60"/><text x="4" y="17" fill="#d8441a">P</text></svg></button>
    <button class="task" aria-label="Калькулятор"><svg viewBox="0 0 24 24"><path fill="#fff" d="M3 0h18v24H3z"/><path fill="#120d06" d="M5 2h14v4H5z"/><path stroke="#120d06" stroke-width="2.500" stroke-dasharray="3 2.500" d="M5 10h14M5 15h14M5 20h14"/></svg></button>
    <button class="task" aria-label="Word"><svg viewBox="0 0 24 24" font-family="Open Sans" font-weight="700" font-size="16"><rect x="1" y="1" width="22" height="22" rx="2" fill="#c8dcf6" stroke="#5d8fd0"/><path fill="#fff" d="M11 14h11l1 7-7 2z"/><text x="3" y="17" fill="#1c56ac">W</text></svg></button>
    <button class="task run" aria-label="Chrome"><svg viewBox="0 0 24 24"><circle cx="12" cy="12" r="11" fill="#fbc834"/><path fill="#e0463a" d="M2.500 6.500a11 11 0 0 1 19 0L22 8H12l-5 6z"/><path fill="#28a05a" d="M2.500 6.500A11 11 0 0 0 12 23l5-8.500H8z"/><circle cx="12" cy="12" r="5" fill="#fff"/><circle cx="12" cy="12" r="4" fill="#4c8bf5"/></svg></button>
    <button class="task" aria-label="Редактор"><svg viewBox="0 0 24 24"><path fill="#8fa2cc" stroke="#c6d0ea" d="M1 4q0-3 3-3h17v20H1z"/><path fill="#f4f7ff" d="m8 3 15 2-1 18-14-1z"/><path fill="#2a4a9a" d="M10 6h5v5h-5zM17 14l3 3-3 3-3-3z"/><path fill="none" stroke="#2a4a9a" stroke-dasharray="1 1" d="M12.500 12v5H15"/></svg></button>
    <button class="task act" aria-label="Smeta.RU"><svg><use href="#logo"/></svg></button>
  </div>
  <div class="d-flex align-items-center ms-auto">
    <button class="tray" aria-label="Скрытые значки"><svg viewBox="0 0 18 18"><path fill="none" stroke="#fff" stroke-width="1.500" d="m3 12 6-6 6 6"/></svg></button>
    <button class="tray" aria-label="Сеть"><svg viewBox="0 0 18 18"><path fill="none" stroke="#ddd" stroke-width="1.400" d="M3 16Q4 5 15 4M6 16q1-8 9-9M9 16q1-5 6-6"/><path fill="#fff" d="M12 13h3v3h-3z"/></svg></button>
    <button class="tray" aria-label="Громкость"><svg viewBox="0 0 18 18"><path fill="none" stroke="#fff" stroke-width="1.200" d="M1.500 7h3L8 4v11l-3.500-3h-3zM10 7q2 2.500 0 5"/><path fill="none" stroke="#999" stroke-width="1.200" d="M12 5q4 4.500 0 9M14 3q5 6.500 0 13"/></svg></button>
    <button class="tray" aria-label="Уведомления"><svg viewBox="0 0 18 18"><path fill="#fff" d="M1 2h16v12h-5l-3 3-3-3H1z"/><path stroke="#120d06" d="M4 5.500h10M4 8.500h10M4 11.500h6"/></svg></button>
    <button class="lang">РУС</button>
    <div class="clock">12:10<br>06.06.2016</div>
    <div class="desk"></div>
  </div>
</div>
<script src="https://cdn.jsdelivr.net/npm/bootstrap@5.3.0/dist/js/bootstrap.bundle.min.js"></script>
</body>
</html>
